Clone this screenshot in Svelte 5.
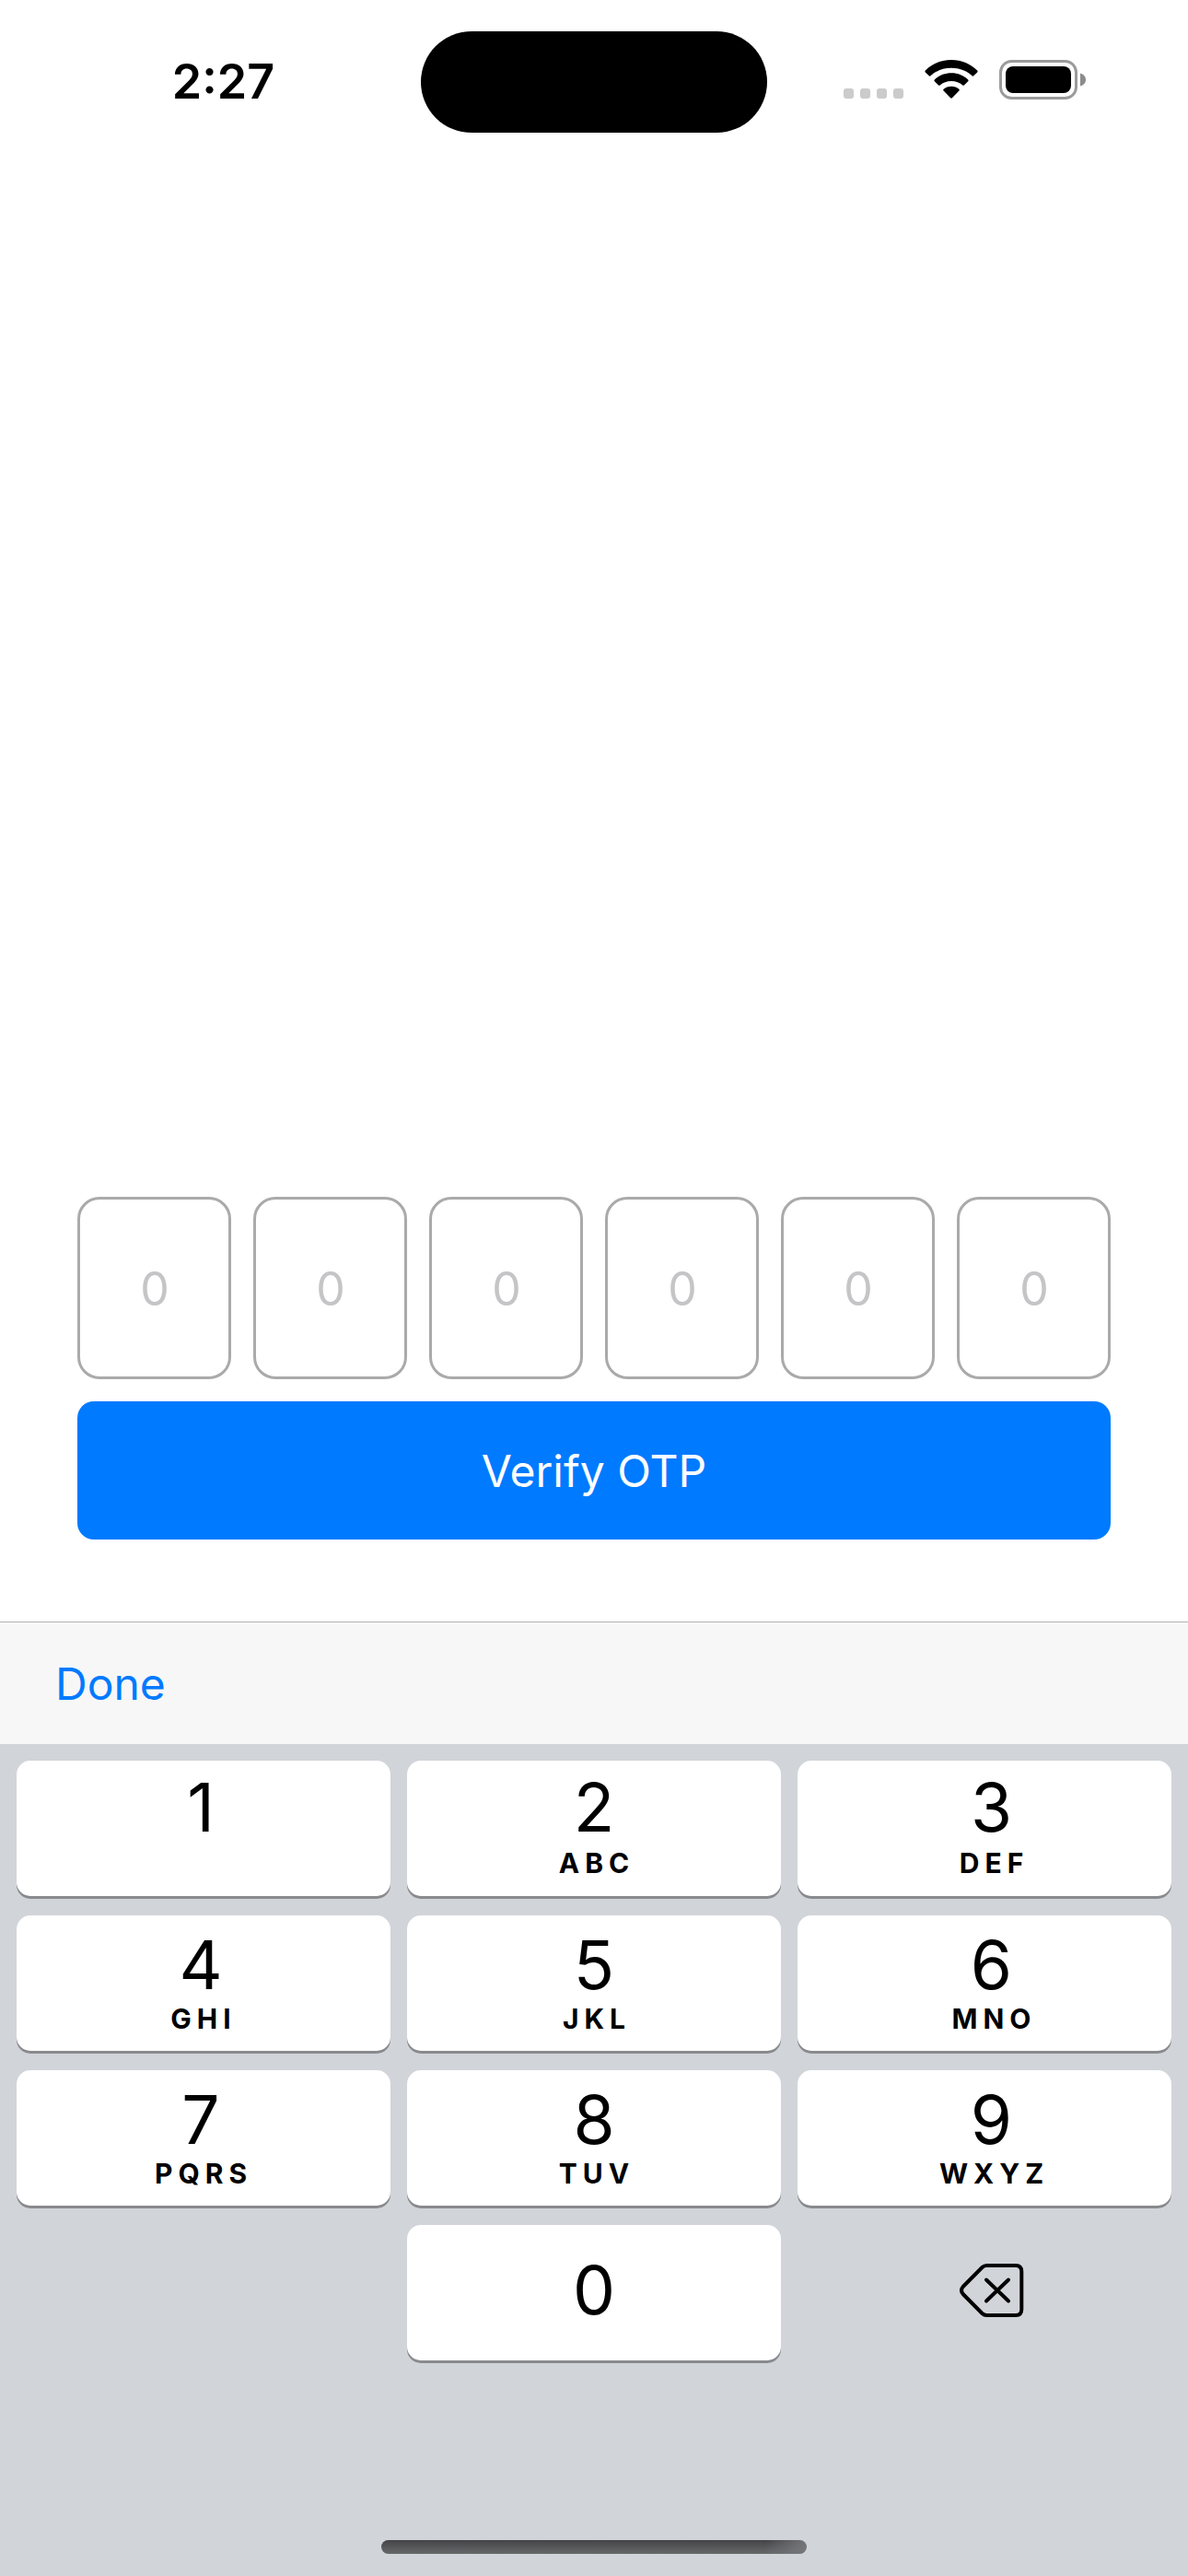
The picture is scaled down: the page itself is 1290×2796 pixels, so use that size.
<script>
  const fields = [1, 2, 3, 4, 5, 6];
  const keys = [
    { digit: '1', letters: '' },
    { digit: '2', letters: 'ABC' },
    { digit: '3', letters: 'DEF' },
    { digit: '4', letters: 'GHI' },
    { digit: '5', letters: 'JKL' },
    { digit: '6', letters: 'MNO' },
    { digit: '7', letters: 'PQRS' },
    { digit: '8', letters: 'TUV' },
    { digit: '9', letters: 'WXYZ' }
  ];
  let code = $state(['', '', '', '', '', '']);

  function press(digit) {
    const i = code.findIndex((c) => c === '');
    if (i >= 0) code[i] = digit;
  }

  function erase() {
    const i = code.findLastIndex((c) => c !== '');
    if (i >= 0) code[i] = '';
  }
</script>

<div class="screen">
  <header class="status">
    <div class="side left"><time>2:27</time></div>
    <div class="island"></div>
    <div class="side right">
      <svg class="dots" width="65" height="12" viewBox="0 0 65 12" fill="#cbcbcb" aria-hidden="true">
        <rect width="11" height="11" rx="3" />
        <rect x="18" width="11" height="11" rx="3" />
        <rect x="36" width="11" height="11" rx="3" />
        <rect x="54" width="11" height="11" rx="3" />
      </svg>
      <svg class="wifi" width="58" height="43" viewBox="0 0 58 43" aria-hidden="true">
        <path d="M29 0C40 0 50 4.300 57.200 11.500Q58 12.500 57.200 13.400L53.200 17.300Q52.400 18 51.500 17.200C45.500 11.700 37.600 8.800 29 8.800C20.400 8.800 12.500 11.700 6.500 17.200Q5.600 18 4.800 17.300L.8 13.400Q0 12.500 .8 11.500C8 4.300 18 0 29 0Z" />
        <path d="M29 14.300C36.300 14.300 42.600 17 47.200 21.400Q48 22.300 47.200 23.200L42.900 27.500Q42.200 28.200 41.300 27.500C38 24.600 33.800 23 29 23C24.200 23 20 24.600 16.700 27.500Q15.800 28.200 15.100 27.500L10.800 23.200Q10 22.300 10.800 21.400C15.400 17 21.700 14.300 29 14.300Z" />
        <path d="M29 28.700C32.300 28.700 35.200 29.800 37.400 31.700Q38.200 32.500 37.400 33.400L29.900 41.300Q29 42.200 28.100 41.300L20.600 33.400Q19.800 32.500 20.600 31.700C22.800 29.800 25.700 28.700 29 28.700Z" />
      </svg>
      <svg class="battery" width="95" height="43" viewBox="0 0 95 43" aria-hidden="true">
        <rect x="1.500" y="1.500" width="82" height="40" rx="12" fill="none" stroke="#9b9b9b" stroke-width="3" />
        <rect x="7" y="7" width="71" height="29" rx="8" />
        <path d="M88 14.500C91.500 15.500 94 18 94 21.500C94 25 91.500 27.500 88 28.500Z" fill="#8c8c8c" />
      </svg>
    </div>
  </header>

  <main>
    <form onsubmit={(e) => e.preventDefault()}>
      <div class="fields">
        {#each fields as n, i}
          <input type="text" inputmode="numeric" maxlength="1" placeholder="0" aria-label={`Digit ${n}`} bind:value={code[i]} />
        {/each}
      </div>
      <button class="verify" type="submit">Verify OTP</button>
    </form>
  </main>

  <div class="toolbar">
    <button type="button" class="done">Done</button>
  </div>

  <section class="keyboard" aria-label="Number pad">
    <div class="keys">
      {#each keys as key, i}
        <button type="button" class="key" class:top={i < 3} onclick={() => press(key.digit)}>
          <span class="digit">{key.digit}</span>
          <span class="letters">{key.letters}</span>
        </button>
      {/each}
      <button type="button" class="key zero" onclick={() => press('0')}>
        <span class="digit">0</span>
      </button>
      <button type="button" class="key delete" aria-label="Delete" onclick={erase}>
        <svg width="70" height="60" viewBox="0 0 70 60" fill="none" stroke="#000" stroke-width="4" stroke-linecap="round" stroke-linejoin="round" aria-hidden="true">
          <path d="M29.500 3H61Q67.300 3 67.300 9.500V50.500Q67.300 57 61 57H29.500Q26.600 57 24.500 55L3.700 34Q.3 30 3.700 26L24.500 5Q26.600 3 29.500 3Z" />
          <path d="M29 18.500L53 41.500M53 18.500L29 41.500" />
        </svg>
      </button>
    </div>
    <div class="home"></div>
  </section>
</div>

<style>
  :global(body) {
    background: #fff;
  }

  .screen {
    min-height: 100vh;
    display: flex;
    flex-direction: column;
    font-family: Inter, 'Liberation Sans', sans-serif;
    color: #000;
  }

  button,
  input {
    font-family: inherit;
    box-sizing: border-box;
    margin: 0;
    padding: 0;
    border: 0;
  }

  .status {
    display: grid;
    grid-template-columns: 1fr 376px 1fr;
    align-items: center;
    padding-top: 34px;
  }

  .island {
    height: 110px;
    border-radius: 55px;
    background: #000;
  }

  .side {
    display: flex;
    justify-content: center;
  }

  .left {
    padding-left: 28px;
  }

  .right {
    padding-right: 28px;
    padding-bottom: 6px;
    align-items: flex-end;
    gap: 23px;
  }

  time {
    font-size: 52px;
    line-height: 60px;
    font-weight: 600;
  }

  main {
    flex: 1;
    display: flex;
    flex-direction: column;
    justify-content: flex-end;
    padding: 0 84px 89px;
  }

  form {
    display: flex;
    flex-direction: column;
    gap: 24px;
  }

  .fields {
    display: grid;
    grid-template-columns: repeat(6, 1fr);
    gap: 24px;
  }

  input {
    width: 100%;
    height: 198px;
    padding: 2px 0 0 1px;
    border: 3px solid #aaa;
    border-radius: 24px;
    background: #fff;
    font-size: 50px;
    text-align: center;
  }

  input::placeholder {
    color: #c5c5c7;
    opacity: 1;
  }

  .verify {
    height: 150px;
    border-radius: 18px;
    background: #007aff;
    color: #fff;
    font-size: 48px;
  }

  .toolbar {
    display: flex;
    align-items: center;
    height: 132px;
    padding: 0 60px;
    border-top: 1px solid #b2b2b2;
    background: #f7f7f7;
  }

  .done {
    background: none;
    color: #007aff;
    font-size: 48px;
  }

  .keyboard {
    display: flex;
    flex-direction: column;
    padding: 18px 18px 24px;
    background: #d1d4d9;
  }

  .keys {
    display: grid;
    grid-template-columns: repeat(3, 1fr);
    gap: 21px 18px;
    margin-bottom: 195px;
  }

  .key {
    display: flex;
    flex-direction: column;
    align-items: center;
    height: 147px;
    padding-top: 14px;
    border-radius: 15px;
    background: #fff;
    box-shadow: 0 3px 0 #898a8d;
    color: #000;
  }

  .key.top {
    padding-top: 11px;
    gap: 2px;
  }

  .key:nth-child(3n + 1):not(.zero) {
    padding-right: 6px;
  }

  .key:nth-child(3n):not(.zero),
  .key.delete {
    padding-left: 15px;
  }

  .digit {
    font-size: 73px;
    line-height: 80px;
  }

  .letters {
    padding-left: 6px;
    font-size: 30px;
    line-height: 36px;
    font-weight: 700;
    letter-spacing: 6px;
  }

  .key.zero,
  .key.delete {
    justify-content: center;
    padding-top: 0;
    padding-bottom: 6px;
  }

  .zero {
    grid-column: 2;
  }

  .delete {
    background: none;
    box-shadow: none;
  }

  .home {
    align-self: center;
    width: 462px;
    height: 15px;
    border-radius: 8px;
    background:
      linear-gradient(100deg, transparent 90%, #77787c),
      linear-gradient(#434447, #68696b);
  }
</style>
